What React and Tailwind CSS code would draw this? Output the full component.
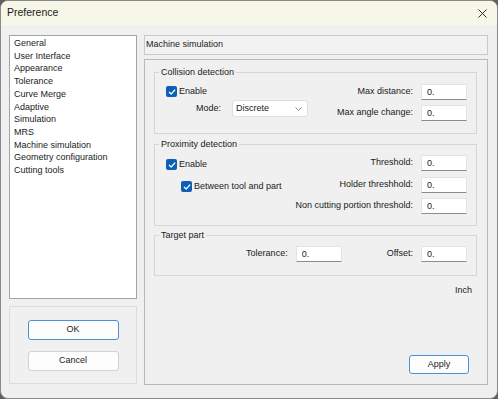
import React from 'react';

const pages = [
  'General',
  'User Interface',
  'Appearance',
  'Tolerance',
  'Curve Merge',
  'Adaptive',
  'Simulation',
  'MRS',
  'Machine simulation',
  'Geometry configuration',
  'Cutting tools',
];

const Check = () => (
  <span className="w-[11px] h-[11px] rounded-[2px] bg-[#0b5fb5] flex items-center justify-center shrink-0">
    <svg width="8" height="8" viewBox="0 0 8 8" fill="none">
      <path d="M1.3 4.2 L3.2 6 L6.8 2" stroke="white" strokeWidth="1.2" strokeLinecap="round" strokeLinejoin="round" />
    </svg>
  </span>
);

const NumField = ({ label, className = '' }) => (
  <div className={`flex items-center justify-end gap-[8px] ${className}`}>
    <span>{label}</span>
    <input
      readOnly
      defaultValue="0."
      className="w-[46px] h-[16px] bg-white border border-[#e4e4e4] border-b-[#8c8c8c] pl-[5px] outline-none text-[#1a1a1a]"
    />
  </div>
);

const Group = ({ title, className = '', children }) => (
  <fieldset className={`border border-[#d6d6d6] ${className}`}>
    <legend className="ml-[4px] px-[2px] leading-[11px]">{title}</legend>
    {children}
  </fieldset>
);

export default function App() {
  return (
    <div className="w-[498px] h-[399px] bg-[#5f5f5f] font-['Liberation_Sans',Arial,sans-serif] text-[9px] text-[#1a1a1a]">
      <div className="w-full h-full rounded-[8px] overflow-hidden border border-[#8a8a8a] bg-[#f0f0f0] flex flex-col">
        {/* title bar */}
        <div className="h-[24px] shrink-0 bg-[#f6f7e6] flex items-center justify-between pl-[6px] pr-[10px]">
          <span className="text-[10.5px] text-[#1b1b1b]">Preference</span>
          <svg width="9" height="9" viewBox="0 0 9 9" fill="none">
            <path d="M0.5 0.5 L8.5 8.5 M8.5 0.5 L0.5 8.5" stroke="#2b2b2b" strokeWidth="1" />
          </svg>
        </div>

        <div className="flex-1 flex pl-[8px] pt-[10px]">
          {/* left column */}
          <div className="w-[128px] flex flex-col gap-[7px]">
            <ul className="h-[264px] bg-white border border-[#a3a3a3] pl-[4px] pt-[1px] leading-[12.7px]">
              {pages.map((p) => (
                <li key={p}>{p}</li>
              ))}
            </ul>
            <div className="h-[78px] border border-[#dcdcdc] flex flex-col items-center justify-center gap-[11px]">
              <button className="w-[91px] h-[20px] bg-[#fdfdfd] border border-[#4b90da] rounded-[3px]">OK</button>
              <button className="w-[91px] h-[20px] bg-[#fdfdfd] border border-[#d2d2d2] rounded-[3px]">Cancel</button>
            </div>
          </div>

          {/* right column */}
          <div className="ml-[7px] w-[344px] flex flex-col gap-[4px]">
            <div className="h-[20px] border border-[#c9c9c9] bg-[#f2f2f2] flex items-center pl-[1px]">
              Machine simulation
            </div>

            <div className="h-[326px] border border-[#b8b8b8] flex flex-col pl-[9px] pr-[10px] pt-[7px] pb-[10px]">
              <Group title="Collision detection" className="pb-[12px]">
                <div className="flex justify-between">
                  <div className="pl-[11px] pt-[8px] flex flex-col">
                    <div className="flex items-center gap-[2px] h-[11px]">
                      <Check />
                      <span>Enable</span>
                    </div>
                    <div className="mt-[3px] ml-[30px] flex items-center gap-[11px]">
                      <span>Mode:</span>
                      <div className="w-[76px] h-[17px] bg-white border border-[#dedede] rounded-[3px] flex items-center justify-between pl-[3px] pr-[5px]">
                        <span>Discrete</span>
                        <svg width="7" height="4" viewBox="0 0 7 4" fill="none">
                          <path d="M0.5 0.5 L3.5 3.5 L6.5 0.5" stroke="#7a7a7a" strokeWidth="0.9" />
                        </svg>
                      </div>
                    </div>
                  </div>
                  <div className="pt-[6px] pr-[9px] flex flex-col gap-[5px]">
                    <NumField label="Max distance:" />
                    <NumField label="Max angle change:" />
                  </div>
                </div>
              </Group>

              <Group title="Proximity detection" className="mt-[5px] pb-[11px]">
                <div className="flex justify-between">
                  <div className="pl-[11px] pt-[9px] flex flex-col">
                    <div className="flex items-center gap-[2px] h-[11px]">
                      <Check />
                      <span>Enable</span>
                    </div>
                    <div className="mt-[11px] ml-[15px] flex items-center gap-[2px] h-[11px]">
                      <Check />
                      <span>Between tool and part</span>
                    </div>
                  </div>
                  <div className="pt-[5px] pr-[9px] flex flex-col gap-[5.5px]">
                    <NumField label="Threshold:" />
                    <NumField label="Holder threshhold:" />
                    <NumField label="Non cutting portion threshold:" />
                  </div>
                </div>
              </Group>

              <Group title="Target part" className="mt-[4px] pb-[13px]">
                <div className="pt-[5px] pr-[9px] flex items-center justify-end">
                  <NumField label="Tolerance:" className="gap-[6px]" />
                  <NumField label="Offset:" className="ml-[45px]" />
                </div>
              </Group>

              <div className="self-end mt-[9px] mr-[5px] leading-[11px]">Inch</div>

              <button className="mt-auto self-end mr-[8px] w-[60px] h-[19px] bg-[#fdfdfd] border border-[#4b90da] rounded-[3px]">
                Apply
              </button>
            </div>
          </div>
        </div>
      </div>
    </div>
  );
}
